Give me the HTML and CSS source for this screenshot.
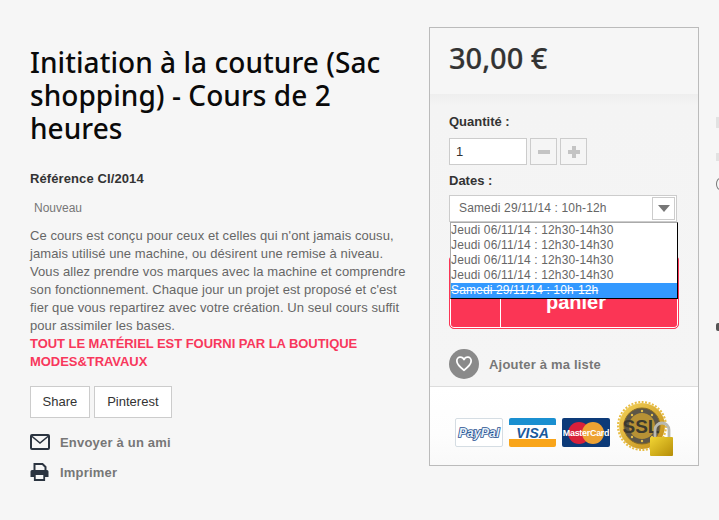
FILE: index.html
```html
<!DOCTYPE html>
<html lang="fr">
<head>
<meta charset="utf-8">
<title>Initiation à la couture</title>
<link rel="stylesheet" href="styles.css">
</head>
<body>
<main class="page">
  <section class="info">
    <h1 class="title">Initiation à la couture (Sac shopping) - Cours de 2 heures</h1>
    <p class="ref">Référence CI/2014</p>
    <p class="cond">Nouveau</p>
    <p class="desc">Ce cours est conçu pour ceux et celles qui n'ont jamais cousu, jamais utilisé une machine, ou désirent une remise à niveau. Vous allez prendre vos marques avec la machine et comprendre son fonctionnement. Chaque jour un projet est proposé et c'est fier que vous repartirez avec votre création. Un seul cours suffit pour assimiler les bases.</p>
    <p class="note">TOUT LE MATÉRIEL EST FOURNI PAR LA BOUTIQUE MODES&amp;TRAVAUX</p>
    <div class="shares"><a class="share">Share</a><a class="share share-wide">Pinterest</a></div>
    <div class="action">
      <svg class="act-ico" width="20" height="16" viewBox="0 0 20 16"><rect x="1" y="1" width="18" height="14" rx="1" fill="none" stroke="#2b3440" stroke-width="2"/><path d="M1.5 2l8.5 7 8.500-7" fill="none" stroke="#2b3440" stroke-width="1.6"/></svg>
      <span>Envoyer à un ami</span>
    </div>
    <div class="action">
      <svg class="act-ico" width="20" height="18" viewBox="0 0 20 18"><path d="M4.500 7V1h8l3 3v3" fill="none" stroke="#2b3440" stroke-width="2"/><path d="M2 7h15a1.500 1.500 0 0 1 1.500 1.500V14H15v-2H4v2H.5V8.500A1.500 1.500 0 0 1 2 7z" fill="#2b3440"/><path d="M4.800 12v5h9.400v-5" fill="none" stroke="#2b3440" stroke-width="1.800"/></svg>
      <span>Imprimer</span>
    </div>
  </section>
  <aside class="box">
    <div class="price">30,00 €</div>
    <div class="buy">
      <label class="lbl">Quantité :</label>
      <div class="qty">
        <div class="qty-input">1</div>
        <div class="qty-btn"><svg width="14" height="14" viewBox="0 0 14 14"><rect x="1" y="5" width="12" height="4" fill="#c4c4c4"/></svg></div>
        <div class="qty-btn"><svg width="14" height="14" viewBox="0 0 14 14"><path d="M5 1h4v4h4v4H9v4H5V9H1V5h4z" fill="#c4c4c4"/></svg></div>
      </div>
      <label class="lbl lbl-dates">Dates :</label>
      <div class="select">
        <div class="select-val">Samedi 29/11/14 : 10h-12h</div>
        <div class="select-arrow"><svg width="12" height="7" viewBox="0 0 12 7"><path d="M0 0h12L6 7z" fill="#777"/></svg></div>
        <ul class="menu">
          <li>Jeudi 06/11/14 : 12h30-14h30</li>
          <li>Jeudi 06/11/14 : 12h30-14h30</li>
          <li>Jeudi 06/11/14 : 12h30-14h30</li>
          <li>Jeudi 06/11/14 : 12h30-14h30</li>
          <li class="sel">Samedi 29/11/14 : 10h-12h</li>
        </ul>
      </div>
      <div class="cart"><span class="cart-ico"></span><span class="cart-txt">panier</span></div>
      <div class="wish">
        <span class="heart"><svg width="18" height="16" viewBox="0 0 20 18"><path d="M10 16C4 11.500 2 9 2 6a4 4 0 0 1 8-1.300A4 4 0 0 1 18 6c0 3-2 5.500-8 10z" fill="none" stroke="#fff" stroke-width="2"/></svg></span>
        <span>Ajouter à ma liste</span>
      </div>
    </div>
    <div class="pay">
      <div class="card card-pp"><span>PayPal</span></div>
      <div class="card card-visa"><span>VISA</span></div>
      <div class="card card-mc"><svg width="38" height="24" viewBox="0 0 38 24"><circle cx="12" cy="12" r="11" fill="#d8203a"/><circle cx="26" cy="12" r="11" fill="#eda233"/></svg><span>MasterCard</span></div>
      <div class="ssl">
        <svg width="58" height="58" viewBox="0 0 58 58">
          <defs><linearGradient id="g" x1="0" y1="0" x2="1" y2="1"><stop offset="0" stop-color="#f5d35a"/><stop offset="1" stop-color="#c08a14"/></linearGradient>
          <linearGradient id="l" x1="0" y1="0" x2="1" y2="1"><stop offset="0" stop-color="#f2d534"/><stop offset="1" stop-color="#b58d08"/></linearGradient></defs>
          <circle cx="25" cy="25" r="24" fill="none" stroke="#e8bd44" stroke-width="2" stroke-dasharray="2 1.500"/>
          <circle cx="25" cy="25" r="23" fill="url(#g)"/>
          <circle cx="25" cy="25" r="18" fill="#5d5647" stroke="#8a6d22" stroke-width="1"/>
          <circle cx="25" cy="25" r="13" fill="#b79135"/>
          <circle cx="25" cy="10" r="1.200" fill="#e8c14c"/><circle cx="15" cy="14" r="1.200" fill="#e8c14c"/><circle cx="35" cy="14" r="1.200" fill="#e8c14c"/><circle cx="15" cy="36" r="1.200" fill="#e8c14c"/><circle cx="35" cy="36" r="1.200" fill="#e8c14c"/><circle cx="25" cy="40" r="1.200" fill="#e8c14c"/>
          <text x="24" y="32" text-anchor="middle" class="ssl-t">SSL</text>
          <path d="M38 38V29a7 7 0 0 1 14 0v9" fill="none" stroke="#b9b9b0" stroke-width="2.800"/>
          <rect x="33" y="36" width="23" height="19" rx="1" fill="url(#l)"/>
        </svg>
      </div>
    </div>
  </aside>
  <div class="edge"><i class="e1"></i><i class="e4"></i><i class="e2"></i><i class="e3"></i></div>
</main>
</body>
</html>
```
FILE: styles.css
```css
* { box-sizing: border-box; }
html, body { margin: 0; padding: 0; }
body { background: #f6f6f6; font-family: "Liberation Sans", Arial, sans-serif; color: #555; width: 719px; height: 520px; overflow: hidden; }
.page { display: flex; padding: 27px 0 0 30px; position: relative; height: 520px; }
.info { width: 376px; margin-right: 23px; flex: none; }
.title { margin: 0 4px 0 0; padding-top: 19px; font: 500 28px/33px "Noto Sans", sans-serif; color: #0a0a0a; letter-spacing: .05px; }
.ref { margin: 26px 0 0; font-size: 13px; line-height: 16px; font-weight: bold; color: #333; letter-spacing: .1px; }
.cond { margin: 13px 0 0 4px; font-size: 12px; line-height: 16px; color: #777; }
.desc { margin: 11px 0 0; font-size: 13px; line-height: 18px; color: #666; letter-spacing: .08px; }
.note { margin: 0; font-size: 13px; line-height: 18px; font-weight: bold; color: #f8385c; letter-spacing: -.05px; }
.shares { display: flex; gap: 4px; margin-top: 15px; }
.share { border: 1px solid #ccc; background: #fff; height: 32px; line-height: 30px; padding: 0 11.5px; font-size: 13px; color: #333; }
.share-wide { padding: 0 12.5px; }
.action { display: flex; align-items: center; height: 30px; font-size: 13px; font-weight: bold; color: #777; letter-spacing: .2px; }
.shares + .action { margin-top: 9px; }
.act-ico { width: 20px; margin-right: 10px; flex: none; }
.box { width: 270px; height: 439px; flex: none; border: 1px solid #bbb; display: flex; flex-direction: column; }
.price { height: 66px; padding: 10px 19px 0; font: 500 29px/40px "Noto Sans", sans-serif; color: #333; -webkit-text-stroke: .2px #333; }
.buy { height: 293px; padding: 20px 19px 0; background: linear-gradient(#eeeeee, #f4f4f4 12px, #f5f5f5); position: relative; border-bottom: 1px solid #ddd; }
.lbl { display: block; font-size: 13px; line-height: 16px; font-weight: bold; color: #333; }
.qty { display: flex; gap: 3px; margin-top: 8px; }
.qty-input { width: 78px; height: 27px; border: 1px solid #ccc; background: #fff; padding-left: 6px; line-height: 25px; font-size: 13px; color: #333; }
.qty-btn { width: 27px; height: 27px; border: 1px solid #ccc; background: #f5f5f5; display: flex; align-items: center; justify-content: center; }
.lbl-dates { margin-top: 8px; }
.select { position: relative; margin-top: 6px; width: 228px; height: 27px; border: 1px solid #ccc; background: #fff; font-size: 12px; color: #666; line-height: 25px; letter-spacing: .15px; }
.select-val { padding-left: 9px; }
.select-arrow { position: absolute; right: 1px; top: 1px; width: 23px; height: 23px; border: 1px solid #ccc; display: flex; align-items: center; justify-content: center; }
.menu { position: absolute; left: 0; top: 26px; z-index: 2; width: 228px; margin: 0; padding: 0; list-style: none; background: #fff; border: 1px solid #000; border-left-color: #aaa; border-top-color: #aaa; font-size: 12px; line-height: 15px; color: #666; letter-spacing: .14px; }
.menu .sel { background: #3399ff; color: #fff; text-decoration: line-through; }
.cart { display: flex; position: absolute; left: 19px; top: 161px; width: 230px; height: 74px; background: #fb3555; border: 1px solid #fb3555; border-radius: 5px; box-shadow: inset 0 0 0 1px #fff; }
.cart-ico { width: 51px; border-right: 1px solid #fff; }
.cart-txt { flex: 1; text-align: center; color: #fff; font-size: 20px; font-weight: bold; line-height: 20px; padding-top: 36px; padding-right: 27px; }
.wish { position: absolute; left: 19px; top: 255px; display: flex; align-items: center; gap: 10px; font-size: 13px; font-weight: bold; color: #777; letter-spacing: .2px; }
.heart { width: 30px; height: 30px; border-radius: 50%; background: #8a8a8a; display: flex; align-items: center; justify-content: center; }
.pay { flex: 1; background: linear-gradient(#fff, #fdfdfd 60%, #f9f9f9); display: flex; padding: 15px 0 0 25px; gap: 6px; align-items: flex-start; }
.card { width: 48px; height: 29px; border-radius: 2px; margin-top: 16px; position: relative; overflow: hidden; font-weight: bold; font-style: italic; display: flex; align-items: center; justify-content: center; }
.card-pp { background: #fff; border: 1px solid #d5dde3; color: #e6eff8; font-size: 12.5px; -webkit-text-stroke: 1.6px #1f4f8f; paint-order: stroke fill; }
.card-visa { width: 47px; background: linear-gradient(#1a8fd0 0 7px, #fff 7px 21px, #f9a51a 21px); color: #1a5a9c; font-size: 14px; }
.card-mc { background: #0c3a78; color: #fff; font-size: 9px; font-style: normal; letter-spacing: -.3px; }
.card-mc svg { position: absolute; left: 5px; top: 3px; }
.card-mc span { position: relative; }
.ssl { margin: -1px 0 0 1px; }
.ssl-t { font: bold 19px "Liberation Sans", sans-serif; fill: #3c3a2e; }
.edge i { position: absolute; display: block; }
.e1 { left: 716px; top: 117px; width: 3px; height: 11px; background: #e2e2e2; }
.e4 { left: 716px; top: 153px; width: 3px; height: 8px; background: #e2e2e2; }
.e2 { left: 716px; top: 178px; width: 8px; height: 12px; border: 1.500px solid #777; border-radius: 50%; }
.e3 { left: 716px; top: 323px; width: 5px; height: 8px; background: #555; border-radius: 2px; }
```
